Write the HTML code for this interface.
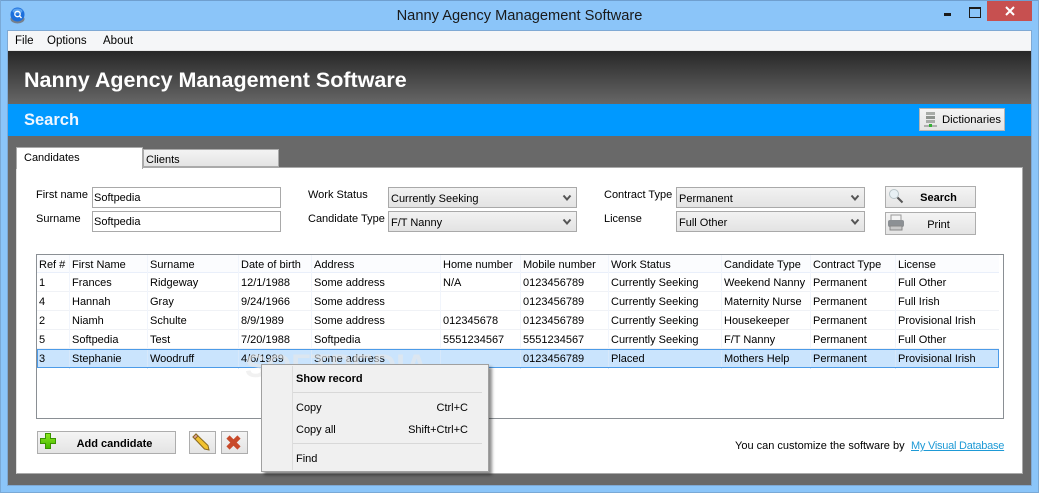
<!DOCTYPE html>
<html><head><meta charset="utf-8"><style>
html,body{margin:0;padding:0}
body{width:1039px;height:493px;overflow:hidden;position:relative;background:#8bc5f9;font:11px/14px "Liberation Sans",sans-serif;color:#000}
.a{position:absolute;white-space:nowrap}
.btn{position:absolute;box-sizing:border-box;border:1px solid #adadad;background:linear-gradient(#f4f4f4,#e4e4e4)}
.inp{position:absolute;box-sizing:border-box;border:1px solid #a9a9a9;background:#fff;width:189px;height:21px;padding:3px 1px;line-height:14px}
.cmb{position:absolute;box-sizing:border-box;border:1px solid #a9a9a9;background:linear-gradient(#f2f2f2,#e3e3e3);width:189px;height:21px;padding:4px 2px;line-height:14px}
.cmb svg{position:absolute;right:4px;top:6px}
.r{position:absolute;left:37px;width:962px;height:19px;display:grid;grid-template-columns:33px 78px 91px 73px 129px 80px 88px 113px 89px 85px 3px;line-height:20px;box-sizing:border-box;border-bottom:1px solid #f0f2f6}
.r span{padding-left:2px;border-right:1px solid #f1f5fc;white-space:nowrap;overflow:visible}
.m{position:absolute;left:34px;white-space:nowrap}
.s{position:absolute;right:20px;white-space:nowrap}
.l{position:absolute;right:6px;height:1px;left:31px;background:#d8d8d8}
</style></head><body>
<div class="a" style="left:0;top:0;width:1039px;height:1px;background:#6f9fcf"></div>
<div class="a" style="left:0;top:0;width:1px;height:493px;background:#7aa9d6"></div>
<div class="a" style="right:0;top:0;width:1px;height:493px;background:#7aa9d6"></div>
<div class="a" style="left:0;bottom:0;width:1039px;height:1px;background:#7aa9d6"></div>
<svg class="a" style="left:9px;top:7px" width="18" height="17" viewBox="0 0 18 17"><ellipse cx="8.500" cy="12" rx="7" ry="4.500" fill="#77808c"/><circle cx="8.500" cy="7.500" r="7" fill="#1c6fdc"/><ellipse cx="8.500" cy="4" rx="5" ry="2.500" fill="#5aa2f0"/><circle cx="8.500" cy="7" r="2.700" fill="none" stroke="#fff" stroke-width="1.300"/><path d="M10.500 9l2 2" stroke="#fff" stroke-width="1.300"/></svg>
<div class="a" style="left:0;width:1039px;top:7px;text-align:center;font-size:14.650px;line-height:18px;color:#1a1a1a">Nanny Agency Management Software</div>
<div class="a" style="left:944px;top:13px;width:7px;height:3px;background:#1b1b1b"></div>
<div class="a" style="left:969px;top:7px;width:10px;height:8px;border:1px solid #1b1b1b;border-top-width:2px"></div>
<div class="a" style="left:987px;top:1px;width:45px;height:20px;background:#c75050"></div>
<svg class="a" style="left:1005px;top:6px" width="10" height="10" viewBox="0 0 10 10"><path d="M1 1l8 8M9 1l-8 8" stroke="#fff" stroke-width="2"/></svg>

<div class="a" style="left:7px;top:30px;width:1025px;height:456px;background:#696969;box-shadow:0 0 0 1px #7fa9d4 inset"></div>
<div class="a" style="left:8px;top:31px;width:1023px;height:20px;background:#f5f6f8;border-bottom:1px solid #e8e8e8;box-sizing:border-box"></div>
<div class="a" style="left:15px;top:34px;font-size:11.500px">File</div>
<div class="a" style="left:47px;top:34px;font-size:11.500px">Options</div>
<div class="a" style="left:103px;top:34px;font-size:11.500px">About</div>
<div class="a" style="left:8px;top:51px;width:1023px;height:53px;background:linear-gradient(#272727,#676767)"></div>
<div class="a" style="left:24px;top:67px;font-weight:bold;font-size:21.500px;line-height:26px;color:#fff">Nanny Agency Management Software</div>
<div class="a" style="left:8px;top:104px;width:1023px;height:32px;background:#0099ff"></div>
<div class="a" style="left:24px;top:110px;font-weight:bold;font-size:16.500px;line-height:20px;color:#f0f6ff">Search</div>
<div class="btn" style="left:919px;top:108px;width:86px;height:23px;border-color:#b5b5b5"></div>
<svg class="a" style="left:923px;top:111px" width="16" height="17" viewBox="0 0 16 17"><rect x="3" y="1" width="9" height="3" fill="#a8aca8"/><rect x="3" y="5" width="9" height="3" fill="#8f948f"/><rect x="3" y="9" width="9" height="3" fill="#a8aca8"/><path d="M1 15h13" stroke="#777"/><rect x="6" y="13" width="3" height="3" fill="#35b035"/></svg>
<div class="a" style="left:942px;top:113px;font-size:11.300px">Dictionaries</div>

<div class="a" style="left:16px;top:167px;width:1007px;height:307px;background:#fff;box-sizing:border-box;border:1px solid #aaa;border-left-color:#e0e0e0"></div>
<div class="a" style="left:143px;top:149px;width:136px;height:18px;box-sizing:border-box;border:1px solid #aaa;background:linear-gradient(#f3f3f3,#e4e4e4);padding:3px 2px;line-height:14px">Clients</div>
<div class="a" style="left:16px;top:147px;width:127px;height:22px;box-sizing:border-box;border:1px solid #aaa;border-bottom:0;background:#fff;padding:3px 7px;line-height:14px">Candidates</div>

<div class="a" style="left:36px;top:188px">First name</div>
<div class="a" style="left:36px;top:212px">Surname</div>
<div class="inp" style="left:92px;top:187px">Softpedia</div>
<div class="inp" style="left:92px;top:211px">Softpedia</div>
<div class="a" style="left:308px;top:188px">Work Status</div>
<div class="a" style="left:308px;top:212px">Candidate Type</div>
<div class="cmb" style="left:388px;top:187px">Currently Seeking<svg width="10" height="8"><path d="M1.500 1.500L5 5.500l3.500-4" fill="none" stroke="#555" stroke-width="2"/></svg></div>
<div class="cmb" style="left:388px;top:211px">F/T Nanny<svg width="10" height="8"><path d="M1.500 1.500L5 5.500l3.500-4" fill="none" stroke="#555" stroke-width="2"/></svg></div>
<div class="a" style="left:604px;top:188px">Contract Type</div>
<div class="a" style="left:604px;top:212px">License</div>
<div class="cmb" style="left:676px;top:187px">Permanent<svg width="10" height="8"><path d="M1.500 1.500L5 5.500l3.500-4" fill="none" stroke="#555" stroke-width="2"/></svg></div>
<div class="cmb" style="left:676px;top:211px">Full Other<svg width="10" height="8"><path d="M1.500 1.500L5 5.500l3.500-4" fill="none" stroke="#555" stroke-width="2"/></svg></div>

<div class="btn" style="left:885px;top:186px;width:91px;height:22px;text-align:center;line-height:23px;font-weight:bold;padding-left:16px">Search</div>
<svg class="a" style="left:888px;top:188px" width="17" height="17" viewBox="0 0 17 17"><circle cx="6" cy="6" r="4.500" fill="#e8f0f4" stroke="#b8c4c8"/><path d="M9.500 9.500l5 5" stroke="#555" stroke-width="2"/></svg>
<div class="btn" style="left:885px;top:212px;width:91px;height:23px;text-align:center;line-height:25px;padding-left:16px">Print</div>
<svg class="a" style="left:887px;top:214px" width="18" height="18" viewBox="0 0 18 18"><rect x="4" y="1" width="10" height="6" fill="#f4f4f4" stroke="#999"/><rect x="1" y="6" width="16" height="7" rx="2" fill="#8c9094"/><rect x="3" y="12" width="12" height="4" fill="#c8c8c8" stroke="#888"/></svg>

<div class="a" style="left:36px;top:254px;width:968px;height:165px;box-sizing:border-box;border:1px solid #8a8f94;background:#fff"></div>
<div class="r" style="top:255px;height:18px;background:#fbfcfe;border-bottom:1px solid #e9effa"><span>Ref #</span><span>First Name</span><span>Surname</span><span>Date of birth</span><span>Address</span><span>Home number</span><span>Mobile number</span><span>Work Status</span><span>Candidate Type</span><span>Contract Type</span><span style="border:0">License</span></div>
<div class="r" style="top:273px"><span>1</span><span>Frances</span><span>Ridgeway</span><span>12/1/1988</span><span>Some address</span><span>N/A</span><span>0123456789</span><span>Currently Seeking</span><span>Weekend Nanny</span><span>Permanent</span><span style="border:0">Full Other</span></div>
<div class="r" style="top:292px"><span>4</span><span>Hannah</span><span>Gray</span><span>9/24/1966</span><span>Some address</span><span></span><span>0123456789</span><span>Currently Seeking</span><span>Maternity Nurse</span><span>Permanent</span><span style="border:0">Full Irish</span></div>
<div class="r" style="top:311px"><span>2</span><span>Niamh</span><span>Schulte</span><span>8/9/1989</span><span>Some address</span><span>012345678</span><span>0123456789</span><span>Currently Seeking</span><span>Housekeeper</span><span>Permanent</span><span style="border:0">Provisional Irish</span></div>
<div class="r" style="top:330px"><span>5</span><span>Softpedia</span><span>Test</span><span>7/20/1988</span><span>Softpedia</span><span>5551234567</span><span>5551234567</span><span>Currently Seeking</span><span>F/T Nanny</span><span>Permanent</span><span style="border:0">Full Other</span></div>
<div class="r" style="top:349px;background:#cae4fd;outline:1px solid #4c9be8;outline-offset:-1px;border:0"><span style="border-color:#d6e8fb">3</span><span style="border-color:#d6e8fb">Stephanie</span><span style="border-color:#d6e8fb">Woodruff</span><span style="border-color:#d6e8fb">4/6/1989</span><span style="border-color:#d6e8fb">Some address</span><span style="border-color:#d6e8fb"></span><span style="border-color:#d6e8fb">0123456789</span><span style="border-color:#d6e8fb">Placed</span><span style="border-color:#d6e8fb">Mothers Help</span><span style="border-color:#d6e8fb">Permanent</span><span style="border:0">Provisional Irish</span></div>
<div class="a" style="left:245px;top:349px;font-weight:bold;font-size:32px;line-height:34px;color:rgba(232,232,232,.6)">SOFTPEDIA</div>

<div class="btn" style="left:37px;top:431px;width:139px;height:23px;text-align:center;font-weight:bold;line-height:25px;padding-left:16px">Add candidate</div>
<svg class="a" style="left:40px;top:433px" width="17" height="17" viewBox="0 0 17 17"><defs><linearGradient id="g" x1="0" y1="0" x2="0" y2="1"><stop offset="0" stop-color="#8ee820"/><stop offset="1" stop-color="#44b800"/></linearGradient></defs><path d="M5.500 .5h5v5h5v5h-5v5h-5v-5h-5v-5h5z" fill="url(#g)" stroke="#3a9400"/></svg>
<div class="btn" style="left:189px;top:431px;width:27px;height:23px"></div>
<svg class="a" style="left:191px;top:432px" width="20" height="20" viewBox="0 0 20 20"><path d="M2 5l3-3 12 11.500 1 4.500-4.500-1z" fill="#f2c230" stroke="#8a6a20"/><path d="M2 5l3-3 2 2-3 3z" fill="#e0a0a0" stroke="#8a6a20"/></svg>
<div class="btn" style="left:221px;top:431px;width:27px;height:23px"></div>
<svg class="a" style="left:224px;top:434px" width="20" height="18" viewBox="0 0 20 18"><path d="M4 3l11 11M15 3L4 14" stroke="#c84a2a" stroke-width="4.500"/></svg>

<div class="a" style="left:735px;top:439px">You can customize the software by</div>
<div class="a" style="left:911px;top:439px;color:#1e9ad6;text-decoration:underline;letter-spacing:-.25px">My Visual Database</div>

<div class="a" style="left:261px;top:364px;width:228px;height:108px;box-sizing:border-box;border:1px solid #a0a0a0;background:#f0f0f0;box-shadow:3px 3px 3px rgba(0,0,0,.45)">
<div class="a" style="left:30px;top:1px;width:1px;height:104px;background:#dcdcdc"></div>
<div class="m" style="top:7px;font-weight:bold">Show record</div>
<div class="l" style="top:27px"></div>
<div class="m" style="top:36px">Copy</div><div class="s" style="top:36px">Ctrl+C</div>
<div class="m" style="top:58px">Copy all</div><div class="s" style="top:58px">Shift+Ctrl+C</div>
<div class="l" style="top:78px"></div>
<div class="m" style="top:87px">Find</div>
</div>
</body></html>
